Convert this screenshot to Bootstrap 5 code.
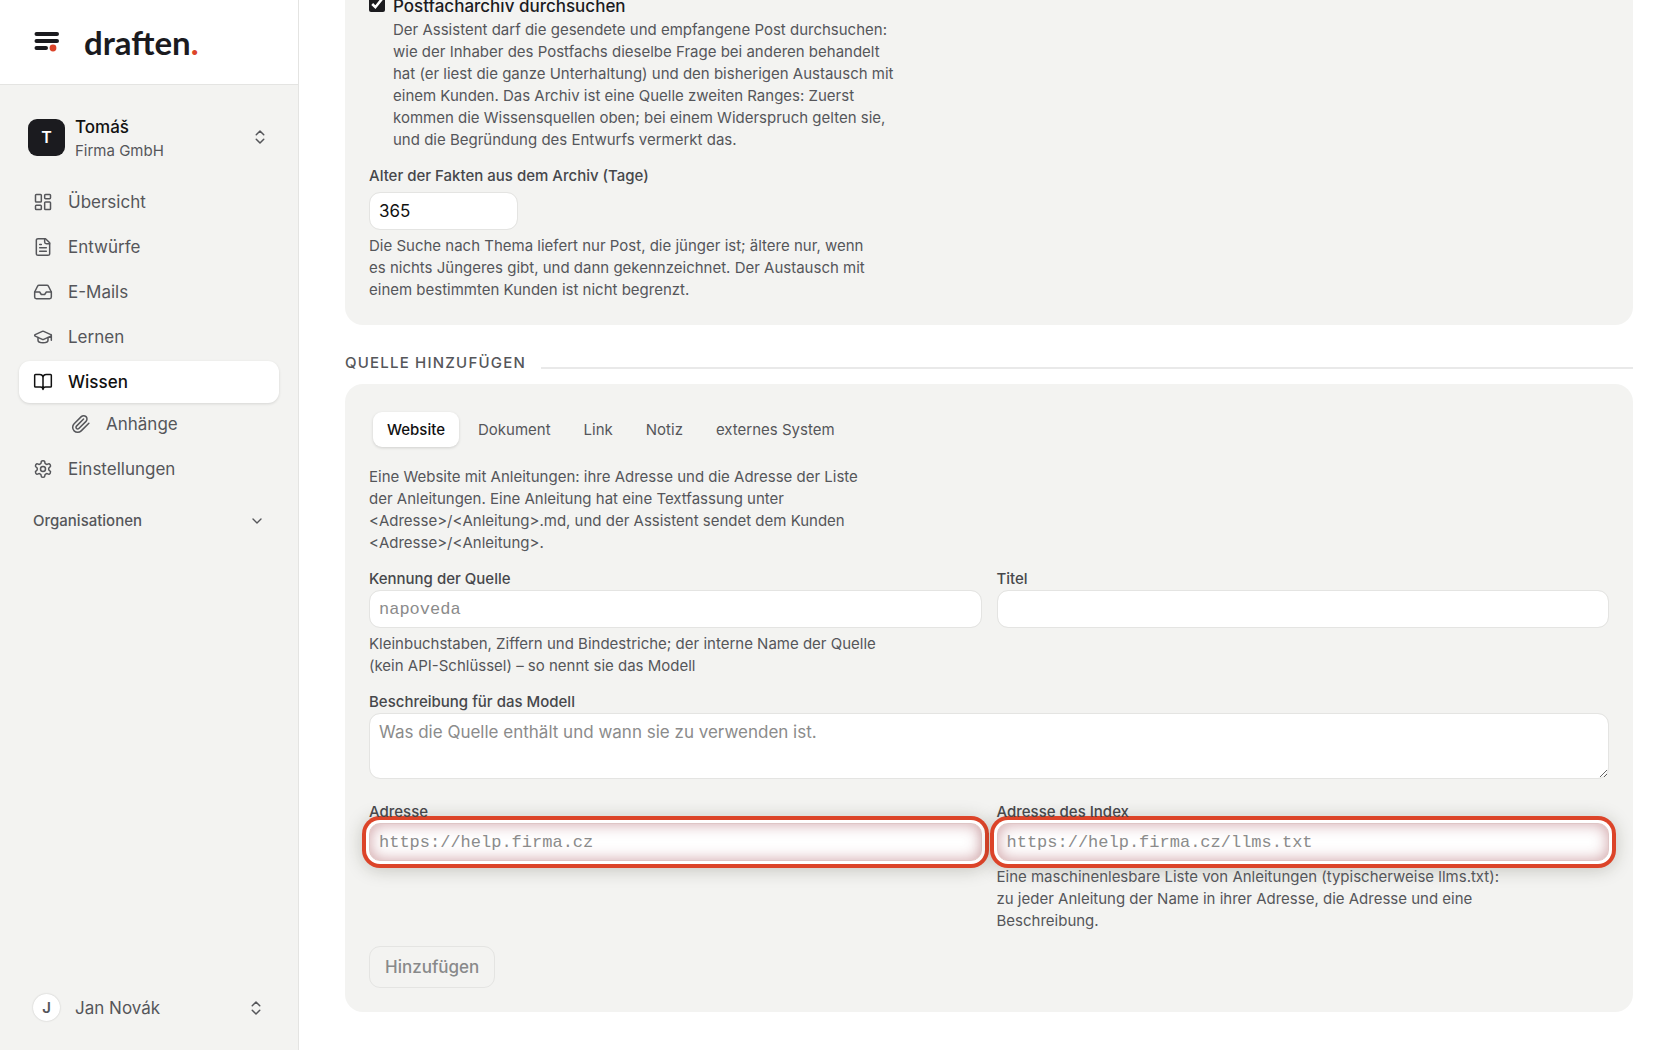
<!DOCTYPE html>
<html lang="de">
<head>
<meta charset="utf-8">
<meta name="viewport" content="width=device-width, initial-scale=1">
<title>draften. – Wissen</title>
<link href="https://cdn.jsdelivr.net/npm/bootstrap@5.3.0/dist/css/bootstrap.min.css" rel="stylesheet">
<style>
:root{--ink:#1b1b1f;--soft:#55565a;--panel:#f3f3f1;--line:#e4e4e2;--accent:#dc4429}
body{font-family:Inter,"Liberation Sans",sans-serif;font-size:17px;line-height:26px;color:var(--ink);background:#fff}
svg{flex:none;fill:none;stroke:currentColor;stroke-width:1.8;stroke-linecap:round;stroke-linejoin:round}
.side{width:299px;background:var(--panel);border-right:1px solid var(--line);color:var(--soft)}
.brand-bar{height:85px;background:#fff;border-bottom:1px solid var(--line);padding:0 33px;gap:23px}
.brand-name{font-family:Lato,sans-serif;font-size:33px;line-height:40px;font-weight:700;color:var(--ink);text-decoration:none}
.brand-name span{color:var(--accent)}
.switcher{color:inherit;text-align:left;background:none;border:0;font-size:17px}
.team{padding:0 29px 0 28px;gap:10px;margin-top:26px}
.team-mark{width:37px;height:37px;border-radius:9px;background:var(--ink);color:#fff;font-size:16px;font-weight:600}
.team-name{color:#111;font-weight:500;line-height:24px}
.team-org{font-size:15px;line-height:24px}
.menu{padding:0 19px;margin-top:18px;gap:3px}
.menu a{height:42px;padding:0 14px;gap:15px;border-radius:11px;color:var(--soft);text-decoration:none}
.menu a.active{background:#fff;color:#111;font-weight:500;box-shadow:0 1px 3px rgba(0,0,0,.12)}
.menu a.sub-item{padding-left:52px;margin-top:-3px}
.group-toggle{font-size:15px;font-weight:500;padding:0 33px;margin-top:18px}
.person{padding:0 33px;gap:15px;margin-bottom:29px}
.person-mark{width:27px;height:27px;background:#fff;font-size:15px;font-weight:600;box-shadow:0 0 2px rgba(0,0,0,.2)}
.content{padding:0 47px 38px 46px}
.panel-box{background:var(--panel);border-radius:18px;padding:24px}
.panel-cut{border-top-left-radius:0;border-top-right-radius:0;padding-top:0;margin-top:-7px}
.hint{font-size:15px;line-height:22px;color:var(--soft);max-width:510px;margin:0}
.form-control + .hint{margin-top:5px}
.field-label{display:block;font-size:15px;line-height:22px;font-weight:500;color:#46474b}
.form-control{font-size:17px;line-height:26px;padding:5px 9px;border:1px solid var(--line);border-radius:11px;color:#111;height:38px}
.form-control::placeholder{color:#8b8b8b}
textarea.form-control{height:66px}
.mono{font-family:"Liberation Mono",monospace}
.spaced{margin-top:14px}
.spaced-lg{margin-top:22px}
.days{width:149px;margin-top:5px}
.archive{width:16px;height:16px;margin:3px 0 0;accent-color:var(--ink)}
.section-title{font-size:15px;line-height:22px;font-weight:500;letter-spacing:.08em;color:var(--soft);margin:0}
.rule{height:2px;background:#e9e9e9;margin-top:10px}
.section-head{margin:27px 0 10px;gap:15px}
.tabs{padding:4px;margin-bottom:15px;gap:5px}
.tabs .nav-link{font-size:15px;line-height:23px;padding:6px 14px;border:0;background:none;border-radius:9px;color:var(--soft)}
.tabs .nav-link.active{background:#fff;color:#111;font-weight:500;box-shadow:0 1px 3px rgba(0,0,0,.15)}
.pair{--bs-gutter-x:15px}
.flagged{border-color:#dfc6c6;box-shadow:inset 0 0 15px rgba(150,50,60,.45),0 0 0 3px #fff,0 0 0 7px var(--accent),0 2px 18px 6px rgba(40,40,20,.25)}
.btn.add{font-size:17px;line-height:26px;font-weight:500;padding:7px 15px;border:1px solid var(--line);border-radius:11px;color:#88898a;opacity:1}
</style>
<script src="https://cdn.jsdelivr.net/npm/bootstrap@5.3.0/dist/js/bootstrap.bundle.min.js"></script>
</head>
<body>
<div class="d-flex min-vh-100">
  <aside class="side d-flex flex-column flex-shrink-0">
    <div class="brand-bar d-flex align-items-center">
      <svg width="28" height="22" viewBox="0 0 28 22" aria-hidden="true"><path d="M3.500 3h20.500M3.500 10h20.500M3.500 17h9.500" stroke="#1b1b1f" stroke-width="4"/><circle cx="20" cy="17" r="3.400" fill="#dc4429" stroke="none"/></svg>
      <a href="#" class="brand-name">draften<span>.</span></a>
    </div>
    <button type="button" class="switcher team d-flex align-items-center">
      <span class="team-mark d-flex align-items-center justify-content-center">T</span>
      <span class="flex-grow-1 pt-1"><span class="team-name d-block">Tomáš</span><span class="team-org d-block">Firma GmbH</span></span>
      <svg width="18" height="18" viewBox="0 0 24 24"><path d="m7 15 5 5 5-5M7 9l5-5 5 5" stroke-width="2"/></svg>
    </button>
    <nav class="menu nav flex-column flex-nowrap">
      <a href="#" class="d-flex align-items-center"><svg width="20" height="20" viewBox="0 0 24 24"><rect x="3" y="3" width="7" height="9" rx="1"/><rect x="14" y="3" width="7" height="5" rx="1"/><rect x="14" y="12" width="7" height="9" rx="1"/><rect x="3" y="16" width="7" height="5" rx="1"/></svg>Übersicht</a>
      <a href="#" class="d-flex align-items-center"><svg width="20" height="20" viewBox="0 0 24 24"><path d="M15 2H6a2 2 0 0 0-2 2v16a2 2 0 0 0 2 2h12a2 2 0 0 0 2-2V7Z"/><path d="M14 2v4a2 2 0 0 0 2 2h4M10 9H8M16 13H8M16 17H8"/></svg>Entwürfe</a>
      <a href="#" class="d-flex align-items-center"><svg width="20" height="20" viewBox="0 0 24 24"><path d="M22 12h-6l-2 3h-4l-2-3H2"/><path d="M5.450 5.110 2 12v6a2 2 0 0 0 2 2h16a2 2 0 0 0 2-2v-6l-3.450-6.890A2 2 0 0 0 16.760 4H7.240a2 2 0 0 0-1.790 1.110z"/></svg>E-Mails</a>
      <a href="#" class="d-flex align-items-center"><svg width="20" height="20" viewBox="0 0 24 24"><path d="M21.420 10.920a1 1 0 0 0-.020-1.840L12.830 5.180a2 2 0 0 0-1.660 0L2.600 9.080a1 1 0 0 0 0 1.830l8.570 3.910a2 2 0 0 0 1.660 0zM22 10v6"/><path d="M6 12.500V16a6 3 0 0 0 12 0v-3.500"/></svg>Lernen</a>
      <a href="#" class="active d-flex align-items-center" aria-current="page"><svg width="20" height="20" viewBox="0 0 24 24"><path d="M12 7v14M3 18a1 1 0 0 1-1-1V4a1 1 0 0 1 1-1h5a4 4 0 0 1 4 4 4 4 0 0 1 4-4h5a1 1 0 0 1 1 1v13a1 1 0 0 1-1 1h-6a3 3 0 0 0-3 3 3 3 0 0 0-3-3z"/></svg>Wissen</a>
      <a href="#" class="sub-item d-flex align-items-center"><svg width="20" height="20" viewBox="0 0 24 24"><path d="m21.440 11.050-9.190 9.190a6 6 0 0 1-8.490-8.490l8.570-8.570A4 4 0 1 1 18 8.840l-8.590 8.570a2 2 0 0 1-2.830-2.830l8.490-8.480"/></svg>Anhänge</a>
      <a href="#" class="d-flex align-items-center"><svg width="20" height="20" viewBox="0 0 24 24"><path d="M12.220 2h-.44a2 2 0 0 0-2 2v.18a2 2 0 0 1-1 1.730l-.43.25a2 2 0 0 1-2 0l-.15-.080a2 2 0 0 0-2.730.73l-.22.38a2 2 0 0 0 .73 2.730l.15.1a2 2 0 0 1 1 1.720v.51a2 2 0 0 1-1 1.740l-.15.090a2 2 0 0 0-.73 2.730l.22.38a2 2 0 0 0 2.730.73l.15-.080a2 2 0 0 1 2 0l.43.25a2 2 0 0 1 1 1.730V20a2 2 0 0 0 2 2h.44a2 2 0 0 0 2-2v-.18a2 2 0 0 1 1-1.730l.43-.25a2 2 0 0 1 2 0l.15.080a2 2 0 0 0 2.730-.73l.22-.39a2 2 0 0 0-.73-2.730l-.15-.080a2 2 0 0 1-1-1.740v-.5a2 2 0 0 1 1-1.740l.15-.090a2 2 0 0 0 .73-2.730l-.22-.38a2 2 0 0 0-2.730-.73l-.15.080a2 2 0 0 1-2 0l-.43-.25a2 2 0 0 1-1-1.730V4a2 2 0 0 0-2-2z"/><circle cx="12" cy="12" r="3"/></svg>Einstellungen</a>
    </nav>
    <button type="button" class="switcher group-toggle d-flex align-items-center justify-content-between" aria-expanded="false">Organisationen<svg width="16" height="16" viewBox="0 0 24 24"><path d="m6 9 6 6 6-6" stroke-width="2"/></svg></button>
    <button type="button" class="switcher person d-flex align-items-center mt-auto">
      <span class="person-mark rounded-circle d-flex align-items-center justify-content-center">J</span>
      <span class="flex-grow-1">Jan Novák</span>
      <svg width="18" height="18" viewBox="0 0 24 24"><path d="m7 15 5 5 5-5M7 9l5-5 5 5" stroke-width="2"/></svg>
    </button>
  </aside>
  <main class="content flex-grow-1">
    <section class="panel-box panel-cut">
      <div class="d-flex gap-2 align-items-start">
        <input type="checkbox" id="archive" class="archive flex-shrink-0" checked>
        <div>
          <label for="archive" class="d-block fw-medium">Postfacharchiv durchsuchen</label>
          <p class="hint">Der Assistent darf die gesendete und empfangene Post durchsuchen: wie der Inhaber des Postfachs dieselbe Frage bei anderen behandelt hat (er liest die ganze Unterhaltung) und den bisherigen Austausch mit einem Kunden. Das Archiv ist eine Quelle zweiten Ranges: Zuerst kommen die Wissensquellen oben; bei einem Widerspruch gelten sie, und die Begründung des Entwurfs vermerkt das.</p>
        </div>
      </div>
      <label for="days" class="field-label spaced">Alter der Fakten aus dem Archiv (Tage)</label>
      <input type="text" inputmode="numeric" id="days" class="form-control days" value="365">
      <p class="hint">Die Suche nach Thema liefert nur Post, die jünger ist; ältere nur, wenn es nichts Jüngeres gibt, und dann gekennzeichnet. Der Austausch mit einem bestimmten Kunden ist nicht begrenzt.</p>
    </section>

    <div class="section-head d-flex align-items-center">
      <h2 class="section-title text-uppercase">Quelle hinzufügen</h2>
      <div class="rule flex-grow-1"></div>
    </div>

    <form class="panel-box">
      <div class="tabs nav" role="tablist">
        <button type="button" class="nav-link active" role="tab" aria-selected="true">Website</button>
        <button type="button" class="nav-link" role="tab">Dokument</button>
        <button type="button" class="nav-link" role="tab">Link</button>
        <button type="button" class="nav-link" role="tab">Notiz</button>
        <button type="button" class="nav-link" role="tab">externes System</button>
      </div>
      <p class="hint">Eine Website mit Anleitungen: ihre Adresse und die Adresse der Liste der Anleitungen. Eine Anleitung hat eine Textfassung unter &lt;Adresse&gt;/&lt;Anleitung&gt;.md, und der Assistent sendet dem Kunden &lt;Adresse&gt;/&lt;Anleitung&gt;.</p>
      <div class="row pair spaced">
        <div class="col-6">
          <label for="key" class="field-label">Kennung der Quelle</label>
          <input type="text" id="key" class="form-control mono" placeholder="napoveda">
          <p class="hint">Kleinbuchstaben, Ziffern und Bindestriche; der interne Name der Quelle (kein API-Schlüssel) – so nennt sie das Modell</p>
        </div>
        <div class="col-6">
          <label for="title" class="field-label">Titel</label>
          <input type="text" id="title" class="form-control">
        </div>
      </div>
      <label for="about" class="field-label spaced">Beschreibung für das Modell</label>
      <textarea id="about" class="form-control" placeholder="Was die Quelle enthält und wann sie zu verwenden ist."></textarea>
      <div class="row pair spaced-lg">
        <div class="col-6">
          <label for="url" class="field-label">Adresse</label>
          <input type="text" id="url" class="form-control mono flagged" placeholder="https://help.firma.cz">
        </div>
        <div class="col-6">
          <label for="index" class="field-label">Adresse des Index</label>
          <input type="text" id="index" class="form-control mono flagged" placeholder="https://help.firma.cz/llms.txt">
          <p class="hint">Eine maschinenlesbare Liste von Anleitungen (typischerweise llms.txt): zu jeder Anleitung der Name in ihrer Adresse, die Adresse und eine Beschreibung.</p>
        </div>
      </div>
      <button type="submit" class="btn add spaced" disabled>Hinzufügen</button>
    </form>
  </main>
</div>
</body>
</html>
